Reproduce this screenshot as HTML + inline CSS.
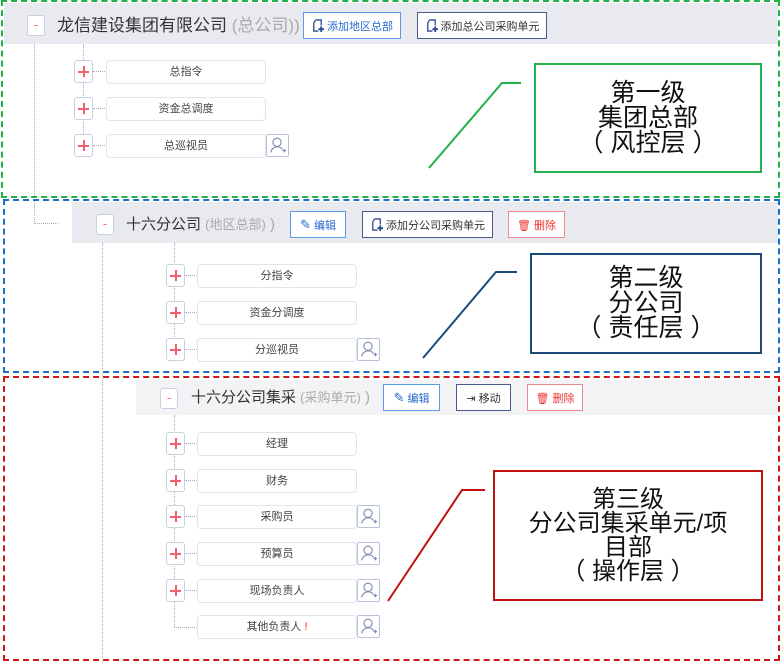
<!DOCTYPE html>
<html><head><meta charset="utf-8"><style>
*{box-sizing:border-box;margin:0;padding:0}
body{width:784px;height:662px;position:relative;background:#fff;font-family:"Liberation Sans","Noto Sans CJK SC",sans-serif;overflow:hidden;color:#333}
.a{position:absolute}
.band{position:absolute;background:#e8eaf0}
.minus{position:absolute;width:18px;height:21px;border:1px solid #c9d0e3;border-radius:3px;background:#fff;color:#f07080;font-size:13px;text-align:center;line-height:18px}
.t{position:absolute;white-space:nowrap}
.g{color:#aaa}
.btn{position:absolute;height:27px;border:1px solid;background:#fff;font-size:11px;display:flex;align-items:center;justify-content:center;gap:3px;white-space:nowrap}
.b1{border-color:#5a9ae8;color:#2a6ad0}
.b2{border-color:#4a5a8a;color:#333}
.b3{border-color:#f08890;color:#e33}
.plus{position:absolute;width:19px;height:23px;border:1px solid #c9d0e3;border-radius:3px;background:#fff}
.plus::before{content:"";position:absolute;left:3px;top:10px;width:11px;height:1.5px;background:#f06070}
.plus::after{content:"";position:absolute;left:8px;top:5px;width:1.5px;height:11px;background:#f06070}
.item{position:absolute;height:24px;border:1px solid #e2e4ea;border-radius:4px;background:#fff;font-size:11px;color:#444;text-align:center;line-height:22px}
.usr{position:absolute;width:23px;height:23px;border:1px solid #b8c2dc;border-radius:2px;background:#fff}
.vd{position:absolute;border-left:1px dotted #a8adc0}
.hd{position:absolute;border-top:1px dotted #a8adc0}
.call{position:absolute;border:2px solid;background:#fff;text-align:center;font-size:25px;line-height:25px;color:#111;display:flex;flex-direction:column;justify-content:center}
.dash{position:absolute;border:2px dashed}
</style></head><body>
<svg width="0" height="0" style="position:absolute"><defs>
<symbol id="u" viewBox="0 0 23 23"><circle cx="11" cy="8" r="4.5" fill="none" stroke="#7a88b0" stroke-width="1.2"/><path d="M4 19c1-4 4-6 7-6s5 1 6 3" fill="none" stroke="#7a88b0" stroke-width="1.2"/><path d="M17 17h4M19 15v4" stroke="#7a88b0" stroke-width="1.2"/></symbol>
<symbol id="doc" viewBox="0 0 14 14"><path d="M5 1h6v6M3 4v9h5" fill="none" stroke="#2a4a90" stroke-width="1.4"/><path d="M3 4l2-3" stroke="#2a4a90" stroke-width="1.4"/><path d="M8 11h6M11 8v6" stroke="#2a4a90" stroke-width="2"/></symbol>
</defs></svg>

<!-- level 1 -->
<div class="band" style="left:4px;top:3px;width:774px;height:41px"></div>
<div class="minus" style="left:27px;top:15px">-</div>
<div class="t" style="left:57px;top:11px;font-size:17px">龙信建设集团有限公司 <span class="g">(总公司)</span><span class="g">)</span></div>
<div class="btn b1" style="left:303px;top:12px;width:98px"><svg width="13" height="13"><use href="#doc"/></svg>添加地区总部</div>
<div class="btn b2" style="left:417px;top:12px;width:130px"><svg width="13" height="13"><use href="#doc"/></svg>添加总公司采购单元</div>
<div class="vd" style="left:34px;top:44px;height:180px"></div>
<div class="hd" style="left:34px;top:223px;width:24px"></div>
<div class="vd" style="left:83px;top:44px;height:102px"></div>
<div class="plus" style="left:74px;top:60px"></div><div class="hd" style="left:93px;top:71px;width:12px"></div><div class="item" style="left:106px;top:60px;width:160px">总指令</div>
<div class="plus" style="left:74px;top:97px"></div><div class="hd" style="left:93px;top:108px;width:12px"></div><div class="item" style="left:106px;top:97px;width:160px">资金总调度</div>
<div class="plus" style="left:74px;top:134px"></div><div class="hd" style="left:93px;top:145px;width:12px"></div><div class="item" style="left:106px;top:134px;width:160px">总巡视员</div>
<svg class="usr" style="left:266px;top:134px"><use href="#u"/></svg>

<!-- level 2 -->
<div class="band" style="left:72px;top:202px;width:706px;height:41px"></div>
<div class="minus" style="left:96px;top:214px">-</div>
<div class="t" style="left:126px;top:213px;font-size:15px">十六分公司 <span class="g" style="font-size:13px">(地区总部)</span> <span class="g">)</span></div>
<div class="btn b1" style="left:290px;top:211px;width:56px"><span style="font-size:13px">✎</span>编辑</div>
<div class="btn b2" style="left:362px;top:211px;width:131px"><svg width="13" height="13"><use href="#doc"/></svg>添加分公司采购单元</div>
<div class="btn b3" style="left:508px;top:211px;width:57px">🗑 删除</div>
<div class="vd" style="left:102px;top:243px;height:420px"></div>
<div class="vd" style="left:174px;top:243px;height:106px"></div>
<div class="plus" style="left:166px;top:264px"></div><div class="hd" style="left:185px;top:275px;width:12px"></div><div class="item" style="left:197px;top:264px;width:160px">分指令</div>
<div class="plus" style="left:166px;top:301px"></div><div class="hd" style="left:185px;top:312px;width:12px"></div><div class="item" style="left:197px;top:301px;width:160px">资金分调度</div>
<div class="plus" style="left:166px;top:338px"></div><div class="hd" style="left:185px;top:349px;width:12px"></div><div class="item" style="left:197px;top:338px;width:160px">分巡视员</div>
<svg class="usr" style="left:357px;top:338px"><use href="#u"/></svg>

<!-- level 3 -->
<div class="band" style="left:136px;top:380px;width:642px;height:35px;background:#f3f3f6"></div>
<div class="minus" style="left:160px;top:388px">-</div>
<div class="t" style="left:191px;top:386px;font-size:15px">十六分公司集采 <span class="g" style="font-size:13px">(采购单元)</span> <span class="g">)</span></div>
<div class="btn b1" style="left:383px;top:384px;width:57px"><span style="font-size:13px">✎</span>编辑</div>
<div class="btn b2" style="left:456px;top:384px;width:55px">⇥ 移动</div>
<div class="btn b3" style="left:527px;top:384px;width:56px">🗑 删除</div>
<div class="vd" style="left:174px;top:415px;height:212px"></div>
<div class="hd" style="left:174px;top:627px;width:23px"></div>
<div class="plus" style="left:166px;top:432px"></div><div class="hd" style="left:185px;top:443px;width:12px"></div><div class="item" style="left:197px;top:432px;width:160px">经理</div>
<div class="plus" style="left:166px;top:469px"></div><div class="hd" style="left:185px;top:480px;width:12px"></div><div class="item" style="left:197px;top:469px;width:160px">财务</div>
<div class="plus" style="left:166px;top:505px"></div><div class="hd" style="left:185px;top:516px;width:12px"></div><div class="item" style="left:197px;top:505px;width:160px">采购员</div>
<div class="plus" style="left:166px;top:542px"></div><div class="hd" style="left:185px;top:553px;width:12px"></div><div class="item" style="left:197px;top:542px;width:160px">预算员</div>
<div class="plus" style="left:166px;top:579px"></div><div class="hd" style="left:185px;top:590px;width:12px"></div><div class="item" style="left:197px;top:579px;width:160px">现场负责人</div>
<div class="item" style="left:197px;top:615px;width:160px">其他负责人 <span style="color:#e22">!</span></div>
<svg class="usr" style="left:357px;top:505px"><use href="#u"/></svg>
<svg class="usr" style="left:357px;top:542px"><use href="#u"/></svg>
<svg class="usr" style="left:357px;top:579px"><use href="#u"/></svg>
<svg class="usr" style="left:357px;top:615px"><use href="#u"/></svg>

<!-- dashed frames -->
<div class="dash" style="left:1px;top:0px;width:779px;height:198px;border-color:#22b04a"></div>
<div class="dash" style="left:3px;top:199px;width:777px;height:174px;border-color:#1a70c8"></div>
<div class="dash" style="left:3px;top:376px;width:777px;height:285px;border-color:#d01818"></div>

<!-- callouts -->
<svg class="a" style="left:0;top:0" width="784" height="662">
<polyline points="429,168 502,83 521,83" fill="none" stroke="#22b04a" stroke-width="2"/>
<polyline points="423,358 496,272 517,272" fill="none" stroke="#1a4a7a" stroke-width="2"/>
<polyline points="388,601 462,490 485,490" fill="none" stroke="#c01010" stroke-width="2"/>
</svg>
<div class="call" style="left:534px;top:63px;width:228px;height:110px;border-color:#22b04a">第一级<br>集团总部<br>（ 风控层 ）</div>
<div class="call" style="left:530px;top:253px;width:232px;height:101px;border-color:#1a4a7a">第二级<br>分公司<br>（ 责任层 ）</div>
<div class="call" style="left:493px;top:470px;width:270px;height:131px;border-color:#c01010;font-size:24px;line-height:24px">第三级<br>分公司集采单元/项<br>目部<br>（ 操作层 ）</div>
</body></html>
